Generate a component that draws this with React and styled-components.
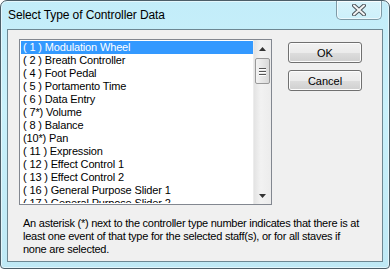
import React from "react";
import styled, { createGlobalStyle } from "styled-components";

const Global = createGlobalStyle`
  html, body { margin: 0; padding: 0; background: #ffffff; }
  body { width: 390px; height: 269px; overflow: hidden; }
`;

const Window = styled.div`
  box-sizing: border-box;
  width: 390px;
  height: 269px;
  border: 1px solid #4c5e68;
  border-radius: 7px 7px 4px 4px;
  background: linear-gradient(180deg, #c3edf9 0%, #c9f1fb 40%, #bfe9f5 100%);
  box-shadow: inset 0 0 0 1px rgba(255, 255, 255, 0.55);
  padding: 0 6px 6px 6px;
  display: flex;
  flex-direction: column;
`;

const TitleBar = styled.div`
  height: 28px;
  display: flex;
  justify-content: space-between;
  align-items: flex-start;
  flex: none;
`;

const Title = styled.div`
  font-family: "Liberation Sans", Arial, sans-serif;
  font-size: 12px;
  letter-spacing: -0.1px;
  color: #000;
  margin-top: 7px;
  padding-left: 1px;
`;

const CloseButton = styled.div`
  box-sizing: border-box;
  width: 46px;
  height: 19px;
  margin-right: 1px;
  border: 1px solid #7f9aa6;
  border-top: none;
  border-radius: 0 0 5px 5px;
  background: linear-gradient(180deg, rgba(255,255,255,0.35), rgba(255,255,255,0.15));
  box-shadow: inset 0 0 0 1px rgba(255,255,255,0.6);
  display: flex;
  align-items: center;
  justify-content: center;
`;

const Client = styled.div`
  flex: 1;
  box-sizing: border-box;
  border: 1px solid #6d8792;
  background: #f0f0f0;
  padding: 9px 0 0 11px;
  display: flex;
  flex-direction: column;
`;

const TopRow = styled.div`
  display: flex;
  align-items: flex-start;
  gap: 16px;
`;

const ListBox = styled.div`
  box-sizing: border-box;
  width: 253px;
  height: 166px;
  border: 1px solid #828790;
  background: #fff;
  display: flex;
  padding: 1px 0 1px 1px;
`;

const Items = styled.div`
  flex: 1;
  overflow: hidden;
`;

const Item = styled.div`
  height: 13px;
  line-height: 13px;
  padding-left: 2px;
  white-space: pre;
  font-family: "Liberation Sans", Arial, sans-serif;
  font-size: 11px;
  letter-spacing: -0.15px;
  color: ${(p) => (p.$selected ? "#fff" : "#000")};
  background: ${(p) => (p.$selected ? "#3399ff" : "transparent")};
`;

const ScrollBar = styled.div`
  width: 17px;
  margin-top: -1px;
  margin-bottom: -1px;
  background: linear-gradient(90deg, #e3e3e3, #f2f2f2 40%, #ececec);
  border-left: 1px solid #ececec;
  display: flex;
  flex-direction: column;
  align-items: center;
`;

const Arrow = styled.div`
  height: 17px;
  width: 17px;
  display: flex;
  align-items: center;
  justify-content: center;
`;

const Thumb = styled.div`
  box-sizing: border-box;
  width: 15px;
  height: 26px;
  margin-top: 1px;
  border: 1px solid #999;
  border-radius: 2px;
  background: linear-gradient(90deg, #f3f3f3, #e6e6e6 50%, #d9d9d9);
  display: flex;
  flex-direction: column;
  align-items: center;
  justify-content: center;
  gap: 2px;
`;

const Grip = styled.div`
  width: 7px;
  height: 1px;
  background: #555;
  box-shadow: 0 1px 0 #fff;
`;

const Spacer = styled.div`
  flex: 1;
`;

const Buttons = styled.div`
  display: flex;
  flex-direction: column;
  gap: 7px;
  margin-top: 3px;
`;

const Button = styled.button`
  box-sizing: border-box;
  width: 74px;
  height: 21px;
  padding: 0;
  border: 1px solid #707070;
  border-radius: 3px;
  background: linear-gradient(180deg, #f2f2f2 0%, #ebebeb 50%, #dddddd 51%, #cfcfcf 100%);
  box-shadow: inset 0 0 0 1px #fcfcfc;
  font-family: "Liberation Sans", Arial, sans-serif;
  font-size: 11px;
  color: #000;
`;

const Note = styled.div`
  margin-top: 12px;
  padding-left: 4px;
  font-family: "Liberation Sans", Arial, sans-serif;
  font-size: 11px;
  line-height: 13px;
  letter-spacing: -0.25px;
  white-space: nowrap;
  color: #000;
`;

const items = [
  "( 1 ) Modulation Wheel",
  "( 2 ) Breath Controller",
  "( 4 ) Foot Pedal",
  "( 5 ) Portamento Time",
  "( 6 ) Data Entry",
  "( 7*) Volume",
  "( 8 ) Balance",
  "(10*) Pan",
  "( 11 ) Expression",
  "( 12 ) Effect Control 1",
  "( 13 ) Effect Control 2",
  "( 16 ) General Purpose Slider 1",
  "( 17 ) General Purpose Slider 2",
];

const noteLines = [
  "An asterisk (*) next to the controller type number indicates that there is at",
  "least one event of that type for the selected staff(s), or for all staves if",
  "none are selected.",
];

export default function App() {
  return (
    <>
      <Global />
      <Window>
        <TitleBar>
          <Title>Select Type of Controller Data</Title>
          <CloseButton>
            <svg width="14" height="12" viewBox="0 0 14 12">
              <path
                d="M2 1.5 L12 10.5 M12 1.5 L2 10.5"
                stroke="#4a5258"
                strokeWidth="4"
                strokeLinecap="round"
              />
              <path
                d="M2 1.5 L12 10.5 M12 1.5 L2 10.5"
                stroke="#f4f4f4"
                strokeWidth="2"
                strokeLinecap="round"
              />
            </svg>
          </CloseButton>
        </TitleBar>
        <Client>
          <TopRow>
            <ListBox>
              <Items>
                {items.map((t, i) => (
                  <Item key={t} $selected={i === 0}>
                    {t}
                  </Item>
                ))}
              </Items>
              <ScrollBar>
                <Arrow>
                  <svg width="7" height="4" viewBox="0 0 7 4">
                    <path d="M3.5 0 L7 4 L0 4 Z" fill="#333" />
                  </svg>
                </Arrow>
                <Thumb>
                  <Grip />
                  <Grip />
                  <Grip />
                </Thumb>
                <Spacer />
                <Arrow>
                  <svg width="7" height="4" viewBox="0 0 7 4">
                    <path d="M0 0 L7 0 L3.5 4 Z" fill="#333" />
                  </svg>
                </Arrow>
              </ScrollBar>
            </ListBox>
            <Buttons>
              <Button>OK</Button>
              <Button>Cancel</Button>
            </Buttons>
          </TopRow>
          <Note>
            {noteLines.map((l) => (
              <div key={l}>{l}</div>
            ))}
          </Note>
        </Client>
      </Window>
    </>
  );
}
